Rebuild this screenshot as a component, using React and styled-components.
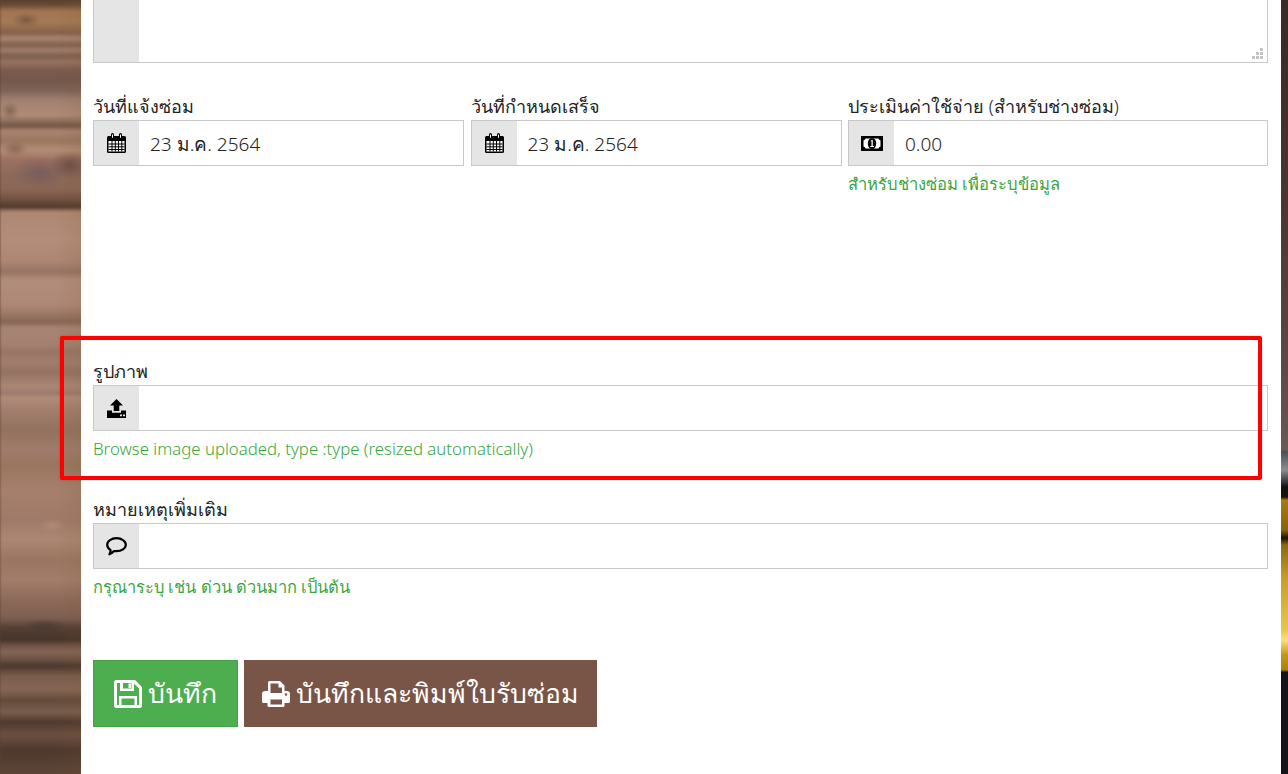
import React from "react";
import styled, { createGlobalStyle } from "styled-components";

const Global = createGlobalStyle`
  html, body { margin: 0; padding: 0; height: 100%; overflow: hidden; background: #fff; }
  #root { height: 100%; }
  * { box-sizing: border-box; }
`;

const Page = styled.div`
  width: 1288px;
  height: 774px;
  display: flex;
  position: relative;
  overflow: hidden;
  font-family: "Noto Sans", "Open Sans", "Liberation Sans", sans-serif;
  font-weight: 300;
  color: #222;
`;

const WoodLeft = styled.div`
  width: 81px;
  flex: none;
  position: relative;
  overflow: hidden;

  &::before {
    content: "";
    position: absolute;
    inset: -6px;
    filter: blur(1.2px);
    background-color: #5a4030;
    background-repeat: no-repeat;
    background-position: 6px 6px;
    background-image:
      radial-gradient(ellipse 14px 7px at 26px 20px, rgba(70,50,40,.45), transparent),
      radial-gradient(ellipse 9px 9px at 10px 111px, rgba(70,50,40,.4), transparent),
      radial-gradient(ellipse 13px 7px at 15px 149px, rgba(80,50,40,.4), transparent),
      radial-gradient(ellipse 28px 16px at 40px 172px, rgba(90,70,90,.4), transparent),
      radial-gradient(ellipse 20px 14px at 70px 165px, rgba(70,50,50,.5), transparent),
      radial-gradient(ellipse 14px 6px at 52px 525px, rgba(210,170,150,.3), transparent),
      radial-gradient(ellipse 22px 6px at 45px 625px, rgba(60,45,38,.45), transparent),
      linear-gradient(90deg, transparent 55px, rgba(120,80,40,.15) 87px),
      linear-gradient(180deg,
        #5a4030 0, #6a4a36 5px, #a07550 11px, #a57a56 22px, #8f684c 30px, #84604e 33px,
        #ab8570 38px, #80604f 45px, #a27d6b 50px, #7d5e50 56px, #977262 62px, #7a5b4e 70px,
        #75584c 80px, #7d6256 90px, #a08070 100px, #b08c76 115px, #735647 126px, #a98470 131px,
        #9a7660 141px, #b48d76 150px, #9c7060 160px, #8c6a5a 175px, #8a6656 190px, #70503f 200px,
        #4f392c 207px, #ad8873 212px, #b48d7a 240px, #ac8574 262px, #967364 272px, #b28d7b 280px,
        #ae8876 305px, #92705f 318px, #866555 322px, #a88474 328px, #a38071 345px, #977564 352px,
        #a17d6d 362px, #947263 372px, #ab8675 386px, #9b796c 394px, #b28c7a 397px, #a27e6e 410px,
        #93725f 430px, #a07b6b 450px, #99765f 465px, #a67f6d 490px, #a07a68 520px, #ab8774 540px,
        #9a7661 560px, #a27d6a 580px, #8d6a59 600px, #7d5f52 618px, #523e33 628px, #47352c 640px,
        #6c5142 645px, #866758 652px, #695041 660px, #4a372e 666px, #7a5d4c 676px, #866756 690px,
        #624a3b 700px, #7b5e4d 712px, #4f3a2f 722px, #6b5042 735px, #4d392e 750px, #5d4538 774px);
  }
`;

const Content = styled.main`
  width: 1200px;
  flex: none;
  background: #fff;
  padding: 0 13px 0 12px;
  display: flex;
  flex-direction: column;
`;

const WoodRight = styled.div`
  width: 7px;
  flex: none;
  background: linear-gradient(180deg,
    #3a2a22 0, #4a362c 200px, #5d4a42 370px, #6b5a52 450px, #4e5058 452px,
    #8b8d95 470px, #111 487px, #1a1208 497px, #a87b10 500px, #8a6408 530px,
    #191308 538px, #8a6a10 545px, #c8a028 580px, #e6c848 630px, #ffe080 640px,
    #c09a10 655px, #a88408 670px, #15131a 672px, #15131a 774px);
`;

const TextBox = styled.div`
  height: 63px;
  display: flex;
  border: 1px solid #c8c8c8;
  border-top: none;
  position: relative;
`;

const TallAddon = styled.div`
  width: 45px;
  background: #e5e5e5;
`;

const Grip = styled.svg`
  position: absolute;
  right: 3px;
  bottom: 2px;
  width: 12px;
  height: 12px;
`;

const Row = styled.div`
  display: flex;
  gap: 6.5px;
  margin-top: ${p => p.$top || 0}px;
`;

const Field = styled.div`
  width: ${p => (p.$w ? `${p.$w}px` : "100%")};
  flex: none;
  margin-top: ${p => p.$top || 0}px;
`;

const Label = styled.label`
  display: block;
  height: 26px;
  font-size: 18px;
  line-height: 24px;
  color: #222;
`;

const InputGroup = styled.div`
  height: 46px;
  display: flex;
  border: 1px solid #c8c8c8;
  background: #fff;
`;

const Addon = styled.span`
  width: 45px;
  flex: none;
  background: #e5e5e5;
  display: flex;
  align-items: center;
  justify-content: center;
  color: #000;
`;

const Value = styled.span`
  padding-left: 11px;
  font-size: 19px;
  line-height: 46px;
  color: #222;
`;

const Help = styled.div`
  font-size: ${p => p.$size || 16.6}px;
  line-height: 24px;
  margin-top: 6px;
  color: #3aa53f;
`;

const Actions = styled.div`
  display: flex;
  gap: 6px;
  margin-top: 61px;
`;

const Button = styled.button`
  width: ${p => p.$w}px;
  height: 67px;
  padding: 0;
  display: flex;
  align-items: center;
  justify-content: center;
  gap: 6px;
  font: inherit;
  font-size: 26.6px;
  color: #fff;
  border: 1px solid ${p => p.$border};
  background: ${p => p.$bg};
`;

const Highlight = styled.div`
  position: absolute;
  left: 60px;
  top: 336px;
  width: 1202px;
  height: 144px;
  border: 4px solid #f00;
  border-radius: 2px;
  box-shadow: 0 0 2px rgba(0,0,0,.25);
  pointer-events: none;
`;

const CalendarIcon = () => (
  <svg width="19" height="20" viewBox="0 0 19 20" aria-hidden="true">
    <path d="M1.500 3H4V1.500a1.400 1.400 0 0 1 3 0V3h5V1.500a1.400 1.400 0 0 1 3 0V3h2.500A1.500 1.500 0 0 1 19 4.500v14a1.500 1.500 0 0 1-1.500 1.500h-16A1.500 1.500 0 0 1 0 18.500v-14A1.500 1.500 0 0 1 1.500 3z" fill="#000" />
    <path d="M1.500 8h16v10.500h-16z" fill="#fff" />
    <path d="M1.500 11h16M1.500 13.800h16M1.500 16.500h16M5 8v10.500M8.300 8v10.500M11.500 8v10.500M14.800 8v10.500" stroke="#000" strokeWidth="1" fill="none" />
    <path d="M5.500 1.500v3.300M13.500 1.500v3.300" stroke="#fff" strokeWidth="1" />
  </svg>
);

const MoneyIcon = () => (
  <svg width="22" height="15" viewBox="0 0 22 15" aria-hidden="true">
    <path d="M0 0h22v15H0z" fill="#000" />
    <path d="M4.500 2.500h13a2.500 2.500 0 0 0 2 2v6a2.500 2.500 0 0 0-2 2h-13a2.500 2.500 0 0 0-2-2v-6a2.500 2.500 0 0 0 2-2z" fill="#fff" />
    <ellipse cx="11" cy="7.500" rx="4.200" ry="5.500" fill="#000" />
    <path d="M9.800 4.500l2-.8v6.300h1.200v1H9.300v-1h1.200V5.300l-.7.300z" fill="#fff" />
  </svg>
);

const UploadIcon = () => (
  <svg width="19" height="19" viewBox="0 0 19 19" aria-hidden="true">
    <path d="M9.500 0l6.500 6.500h-3.700V12H6.700V6.500H3z" fill="#000" />
    <path d="M0 11.500h5v2.300h9v-2.300h5V19H0z" fill="#000" />
    <path d="M13 15.500h2v1.800h-2zM16 15.500h2v1.800h-2z" fill="#e5e5e5" />
  </svg>
);

const CommentIcon = () => (
  <svg width="21" height="19" viewBox="0 0 21 19" aria-hidden="true">
    <path d="M10.500 1.200c5 0 9.300 2.800 9.300 6.500s-4.300 6.500-9.300 6.500c-.9 0-1.700-.1-2.500-.2-1.100 1.300-2.600 2.400-4.600 3.300.8-1.300 1.200-2.600 1.200-4.100C2.900 12 1.200 10 1.200 7.700c0-3.700 4.300-6.500 9.300-6.500z" fill="none" stroke="#000" strokeWidth="2.200" strokeLinejoin="round" />
  </svg>
);

const SaveIcon = () => (
  <svg width="28" height="28" viewBox="0 0 28 28" aria-hidden="true">
    <path d="M2.500 0H21l7 7v18.500a2.500 2.500 0 0 1-2.500 2.500h-23A2.500 2.500 0 0 1 0 25.500v-23A2.500 2.500 0 0 1 2.500 0z" fill="#fff" />
    <path d="M3 3h3v8h14V3.500l5 5V25h-2v-9H5v9H3z" fill="#4cae4f" />
    <path d="M7.500 18.500h13V25h-13zM9 3h8.500v5.500H9z" fill="#4cae4f" />
    <path d="M14.500 3.500h2.500v4.500h-2.500z" fill="#fff" />
  </svg>
);

const PrintIcon = () => (
  <svg width="28" height="26" viewBox="0 0 28 26" aria-hidden="true">
    <path d="M7.500 0h10.500l4.500 4.500V10H25a3 3 0 0 1 3 3v7.500a1.500 1.500 0 0 1-1.500 1.500h-4v2.500a1.500 1.500 0 0 1-1.500 1.500H7a1.500 1.500 0 0 1-1.500-1.500V22h-4A1.500 1.500 0 0 1 0 20.500V13a3 3 0 0 1 3-3h3V1.500A1.500 1.500 0 0 1 7.500 0z" fill="#fff" />
    <path d="M8.500 2.500h8v4h3.500V12H8.500zM8.500 18.500h11.500v5H8.500z" fill="#795548" />
    <circle cx="24" cy="13.500" r="1.200" fill="#795548" />
  </svg>
);

export default function App() {
  return (
    <Page>
      <Global />
      <WoodLeft />
      <Content>
        <TextBox>
          <TallAddon />
          <Grip viewBox="0 0 12 12" aria-hidden="true">
            <path d="M8 0h3v3H8zM4 4h3v3H4zM8 4h3v3H8zM0 8h3v3H0zM4 8h3v3H4zM8 8h3v3H8z" fill="#c4c4c4" />
          </Grip>
        </TextBox>

        <Row $top={31}>
          <Field $w={371}>
            <Label>วันที่แจ้งซ่อม</Label>
            <InputGroup>
              <Addon><CalendarIcon /></Addon>
              <Value>23 ม.ค. 2564</Value>
            </InputGroup>
          </Field>
          <Field $w={371}>
            <Label>วันที่กำหนดเสร็จ</Label>
            <InputGroup>
              <Addon><CalendarIcon /></Addon>
              <Value>23 ม.ค. 2564</Value>
            </InputGroup>
          </Field>
          <Field $w={420}>
            <Label>ประเมินค่าใช้จ่าย (สำหรับช่างซ่อม)</Label>
            <InputGroup>
              <Addon><MoneyIcon /></Addon>
              <Value>0.00</Value>
            </InputGroup>
            <Help>สำหรับช่างซ่อม เพื่อระบุข้อมูล</Help>
          </Field>
        </Row>

        <Field $top={163}>
          <Label>รูปภาพ</Label>
          <InputGroup>
            <Addon><UploadIcon /></Addon>
          </InputGroup>
          <Help $size={16.8}>Browse image uploaded, type :type (resized automatically)</Help>
        </Field>

        <Field $top={36}>
          <Label>หมายเหตุเพิ่มเติม</Label>
          <InputGroup>
            <Addon><CommentIcon /></Addon>
          </InputGroup>
          <Help $size={16.4}>กรุณาระบุ เช่น ด่วน ด่วนมาก เป็นต้น</Help>
        </Field>

        <Actions>
          <Button $w={145} $bg="#4cae4f" $border="#45a049"><SaveIcon />บันทึก</Button>
          <Button $w={353} $bg="#795548" $border="#795548"><PrintIcon />บันทึกและพิมพ์ใบรับซ่อม</Button>
        </Actions>
      </Content>
      <WoodRight />
      <Highlight />
    </Page>
  );
}
